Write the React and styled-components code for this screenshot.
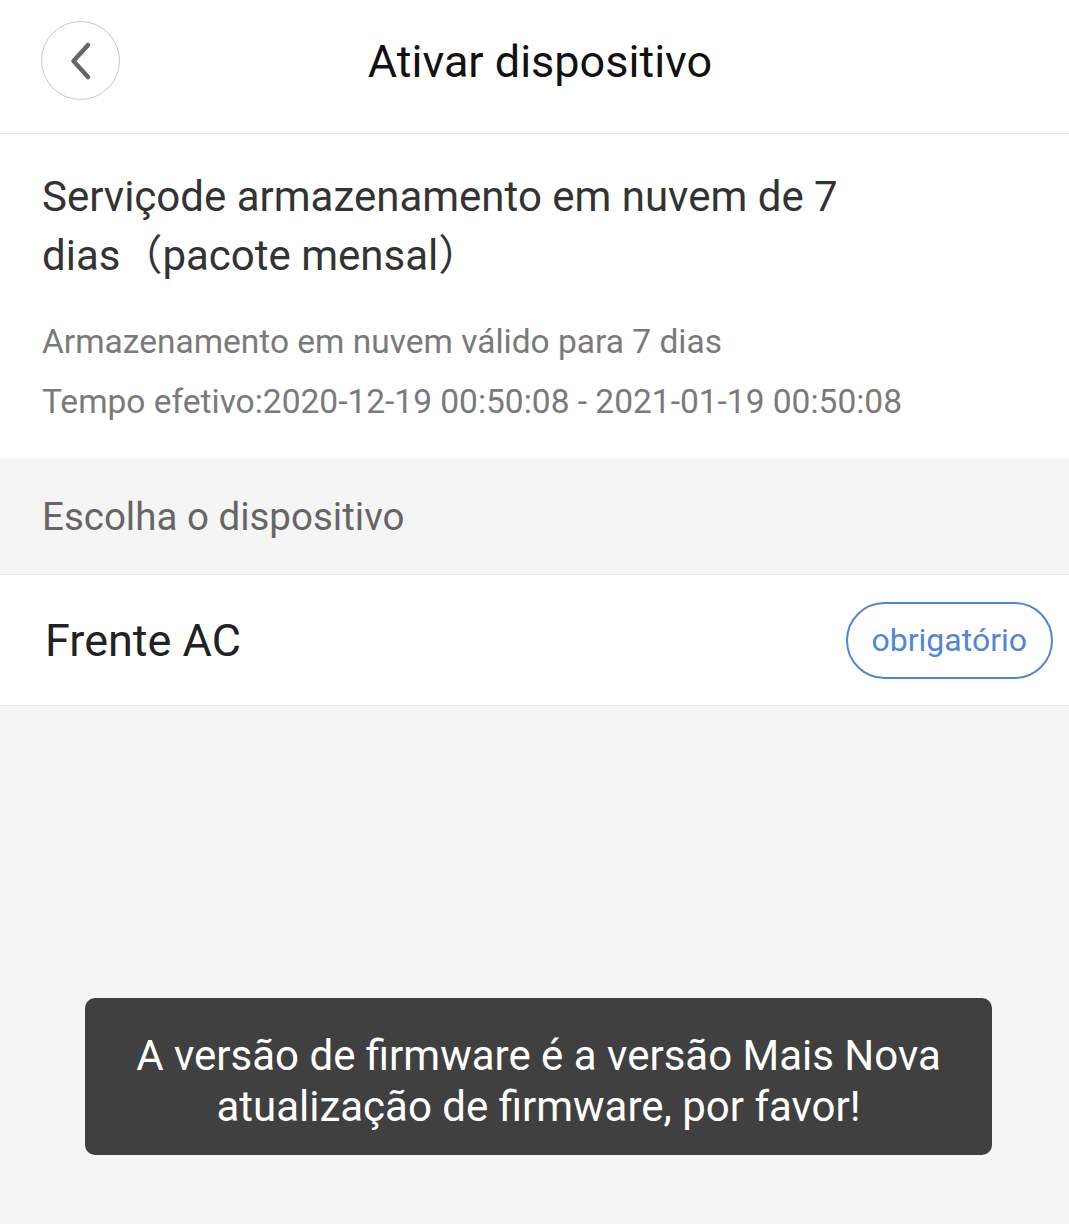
import React from 'react'
import styled, { createGlobalStyle } from 'styled-components'

const GlobalStyle = createGlobalStyle`
  html, body {
    margin: 0;
    padding: 0;
    background: #f5f5f5;
  }
  body {
    font-family: Roboto, "Noto Sans CJK SC", sans-serif;
  }
`

const Page = styled.div`
  min-height: 1224px;
  background: #f5f5f5;
  display: flex;
  flex-direction: column;
  position: relative;
`

const Header = styled.header`
  height: 134px;
  box-sizing: border-box;
  background: #fff;
  border-bottom: 1px solid #e6e6e6;
  display: grid;
  grid-template-columns: 1fr auto 1fr;
  align-items: start;
  padding: 21px 41px 0;
`

const BackButton = styled.button`
  width: 79px;
  height: 79px;
  border-radius: 50%;
  border: 1px solid #c8c8c8;
  background: #fff;
  display: flex;
  align-items: center;
  justify-content: center;
  padding: 0;
  cursor: pointer;
`

const Title = styled.h1`
  margin: 0;
  padding-left: 11px;
  line-height: 82px;
  font-size: 45px;
  font-weight: 400;
  color: #111;
`

const Plan = styled.section`
  background: #fff;
  padding: 33px 42px 26px;
`

const PlanName = styled.h2`
  margin: 0 0 27px;
  max-width: 830px;
  font-size: 42px;
  line-height: 59px;
  font-weight: 400;
  color: #333;
`

const Detail = styled.p`
  margin: 0;
  font-size: 33.5px;
  line-height: 60px;
  color: #7a7a7a;
`

const SectionLabel = styled.div`
  height: 116px;
  padding: 0 42px;
  display: flex;
  align-items: center;
  font-size: 38.5px;
  color: #666;
  border-bottom: 1px solid #e6e6e6;
`

const DeviceRow = styled.div`
  height: 130px;
  background: #fff;
  border-bottom: 1px solid #e6e6e6;
  display: flex;
  align-items: center;
  justify-content: space-between;
  padding: 0 16px 0 45px;
`

const DeviceName = styled.span`
  font-size: 45px;
  color: #222;
`

const Badge = styled.span`
  box-sizing: border-box;
  height: 77px;
  padding: 0 24px;
  border: 2.5px solid #4f86dc;
  border-radius: 40px;
  display: flex;
  align-items: center;
  font-size: 32px;
  color: #4f86dc;
`

const Toast = styled.div`
  position: absolute;
  left: 85px;
  top: 998px;
  width: 907px;
  height: 157px;
  box-sizing: border-box;
  padding-top: 8px;
  border-radius: 10px;
  background: #404040;
  color: #fff;
  display: flex;
  align-items: center;
  justify-content: center;
  text-align: center;
  font-size: 42px;
  line-height: 51px;
`

export default function App() {
  return (
    <>
      <GlobalStyle />
      <Page>
        <Header>
          <BackButton aria-label="voltar">
            <svg width="26" height="40" viewBox="0 0 26 40" fill="none">
              <path d="M20 4 L5.5 20 L20 36" stroke="#666" strokeWidth="4.5" strokeLinecap="round" strokeLinejoin="round" />
            </svg>
          </BackButton>
          <Title>Ativar dispositivo</Title>
        </Header>
        <Plan>
          <PlanName>Serviçode armazenamento em nuvem de 7 dias（pacote mensal）</PlanName>
          <Detail>Armazenamento em nuvem válido para 7 dias</Detail>
          <Detail>Tempo efetivo:2020-12-19 00:50:08 - 2021-01-19 00:50:08</Detail>
        </Plan>
        <SectionLabel>Escolha o dispositivo</SectionLabel>
        <DeviceRow>
          <DeviceName>Frente AC</DeviceName>
          <Badge>obrigatório</Badge>
        </DeviceRow>
        <Toast>
          A versão de firmware é a versão Mais Nova<br />
          atualização de firmware, por favor!
        </Toast>
      </Page>
    </>
  )
}
